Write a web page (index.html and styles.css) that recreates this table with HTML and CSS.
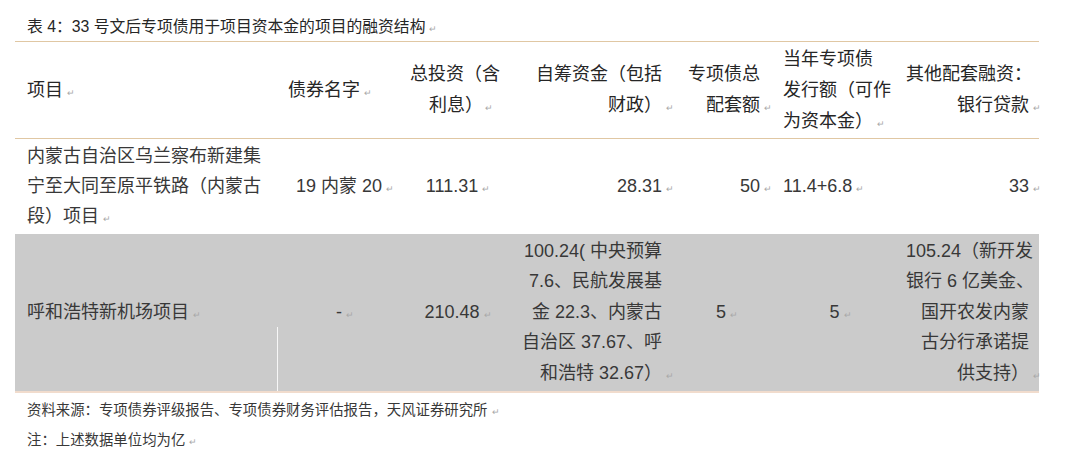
FILE: index.html
```html
<!DOCTYPE html>
<html lang="zh-CN">
<head>
    <meta charset="UTF-8">
    <meta name="viewport" content="width=device-width, initial-scale=1.0">
    <title>表 4：33 号文后专项债用于项目资本金的项目的融资结构</title>
    <link rel="stylesheet" href="styles.css">
</head>
<body>
    <div class="report">
        <h2 class="caption">表 4：33 号文后专项债用于项目资本金的项目的融资结构<i class="pm">↵</i></h2>

        <table class="finance">
            <colgroup>
                <col class="c-name">
                <col class="c-bond">
                <col class="c-total">
                <col class="c-self">
                <col class="c-match">
                <col class="c-issue">
                <col class="c-other">
            </colgroup>
            <thead>
                <tr>
                    <th class="left">项目<i class="pm">↵</i></th>
                    <th class="left">债券名字<i class="pm">↵</i></th>
                    <th class="right">总投资（含<br>利息）<i class="pm wide">↵</i></th>
                    <th class="right">自筹资金（包括<br>财政）<i class="pm">↵</i></th>
                    <th class="right">专项债总<br>配套额<i class="pm">↵</i></th>
                    <th class="left">当年专项债<br>发行额（可作<br>为资本金）<i class="pm">↵</i></th>
                    <th class="right">其他配套融资：<br>银行贷款<i class="pm">↵</i></th>
                </tr>
            </thead>
            <tbody>
                <tr class="row-plain">
                    <td class="left">内蒙古自治区乌兰察布新建集<br>宁至大同至原平铁路（内蒙古<br>段）项目<i class="pm">↵</i></td>
                    <td class="center">19 内蒙 20<i class="pm">↵</i></td>
                    <td class="center">111.31<i class="pm">↵</i></td>
                    <td class="right">28.31<i class="pm">↵</i></td>
                    <td class="right">50<i class="pm">↵</i></td>
                    <td class="left">11.4+6.8<i class="pm">↵</i></td>
                    <td class="right">33<i class="pm">↵</i></td>
                </tr>
                <tr class="row-shaded">
                    <td class="left split">呼和浩特新机场项目<i class="pm">↵</i></td>
                    <td class="center">-<i class="pm">↵</i></td>
                    <td class="center">210.48<i class="pm">↵</i></td>
                    <td class="right">100.24( 中央预算<br>7.6、民航发展基<br>金 22.3、内蒙古<br>自治区 37.67、呼<br>和浩特 32.67）<i class="pm">↵</i></td>
                    <td class="center">5<i class="pm">↵</i></td>
                    <td class="center">5<i class="pm">↵</i></td>
                    <td class="right">105.24（新开发<br>银行 6 亿美金、<br>国开农发内蒙<br>古分行承诺提<br>供支持）<i class="pm">↵</i></td>
                </tr>
            </tbody>
        </table>

        <p class="note">资料来源：专项债券评级报告、专项债券财务评估报告，天风证券研究所<i class="pm">↵</i></p>
        <p class="note">注：上述数据单位均为亿<i class="pm">↵</i></p>
    </div>
</body>
</html>
```

FILE: styles.css
```css
:root {
    --text-color: #383838;
    --head-color: #262626;
    --rule-color: #e0c7a3;
    --rule-bottom: #f1dccd;
    --shade-color: #cbcbcb;
}

* {
    margin: 0;
    padding: 0;
    box-sizing: border-box;
}

body {
    background: #ffffff;
    color: var(--text-color);
    font-family: "Liberation Sans", "Noto Sans CJK SC", sans-serif;
}

.report {
    width: 1024px;
    margin-left: 15px;
    padding-top: 15px;
}

.caption {
    font-size: 15.8px;
    font-weight: normal;
    color: var(--head-color);
    line-height: 24px;
    padding-left: 12px;
    height: 26px;
    white-space: nowrap;
}

/* return marks carried over from the source document */
.pm {
    display: inline-block;
    width: 0;
    text-indent: 4px;
    font-style: normal;
    font-size: 9px;
    line-height: 9px;
    color: #a8a8a8;
    white-space: nowrap;
}

.pm.wide {
    width: 9px;
    text-indent: 2px;
}

.finance {
    width: 1024px;
    border-collapse: collapse;
    table-layout: fixed;
    font-size: 18px;
}

.c-name { width: 263px; }
.c-bond { width: 122px; }
.c-total { width: 104px; }
.c-self { width: 168px; }
.c-match { width: 100px; }
.c-issue { width: 124px; }
.c-other { width: 143px; }

.finance thead tr {
    height: 97px;
    border-top: 1px solid var(--rule-color);
    border-bottom: 1px solid var(--rule-color);
}

.finance th {
    font-weight: normal;
    color: var(--head-color);
    line-height: 31px;
    vertical-align: middle;
}

.finance td {
    line-height: 30px;
    vertical-align: middle;
}

.row-plain {
    height: 95px;
}

.row-shaded {
    height: 158px;
    background: var(--shade-color);
    border-bottom: 2px solid var(--rule-bottom);
}

.row-shaded td {
    line-height: 30.6px;
}

.finance th,
.finance td {
    padding: 0 10px;
    white-space: nowrap;
}

.left { text-align: left; }
.right { text-align: right; }
.center { text-align: center; }

.finance th:first-child,
.finance td:first-child {
    padding-left: 12px;
}

.finance th:nth-child(3) {
    padding-right: 12px;
}

.finance th:nth-child(5),
.finance td:nth-child(5) {
    padding-right: 12px;
}

.finance th:nth-child(6),
.finance td:nth-child(6) {
    padding-left: 11px;
}

/* faint cell edge visible in the lower part of the shaded row */
.split {
    background: linear-gradient(#f7f7f7, #f7f7f7) right bottom / 1px 64px no-repeat;
}

.note {
    font-size: 14.4px;
    line-height: 30px;
    padding-left: 12px;
    color: var(--text-color);
    white-space: nowrap;
}

.note:first-of-type {
    margin-top: 2px;
}
```
